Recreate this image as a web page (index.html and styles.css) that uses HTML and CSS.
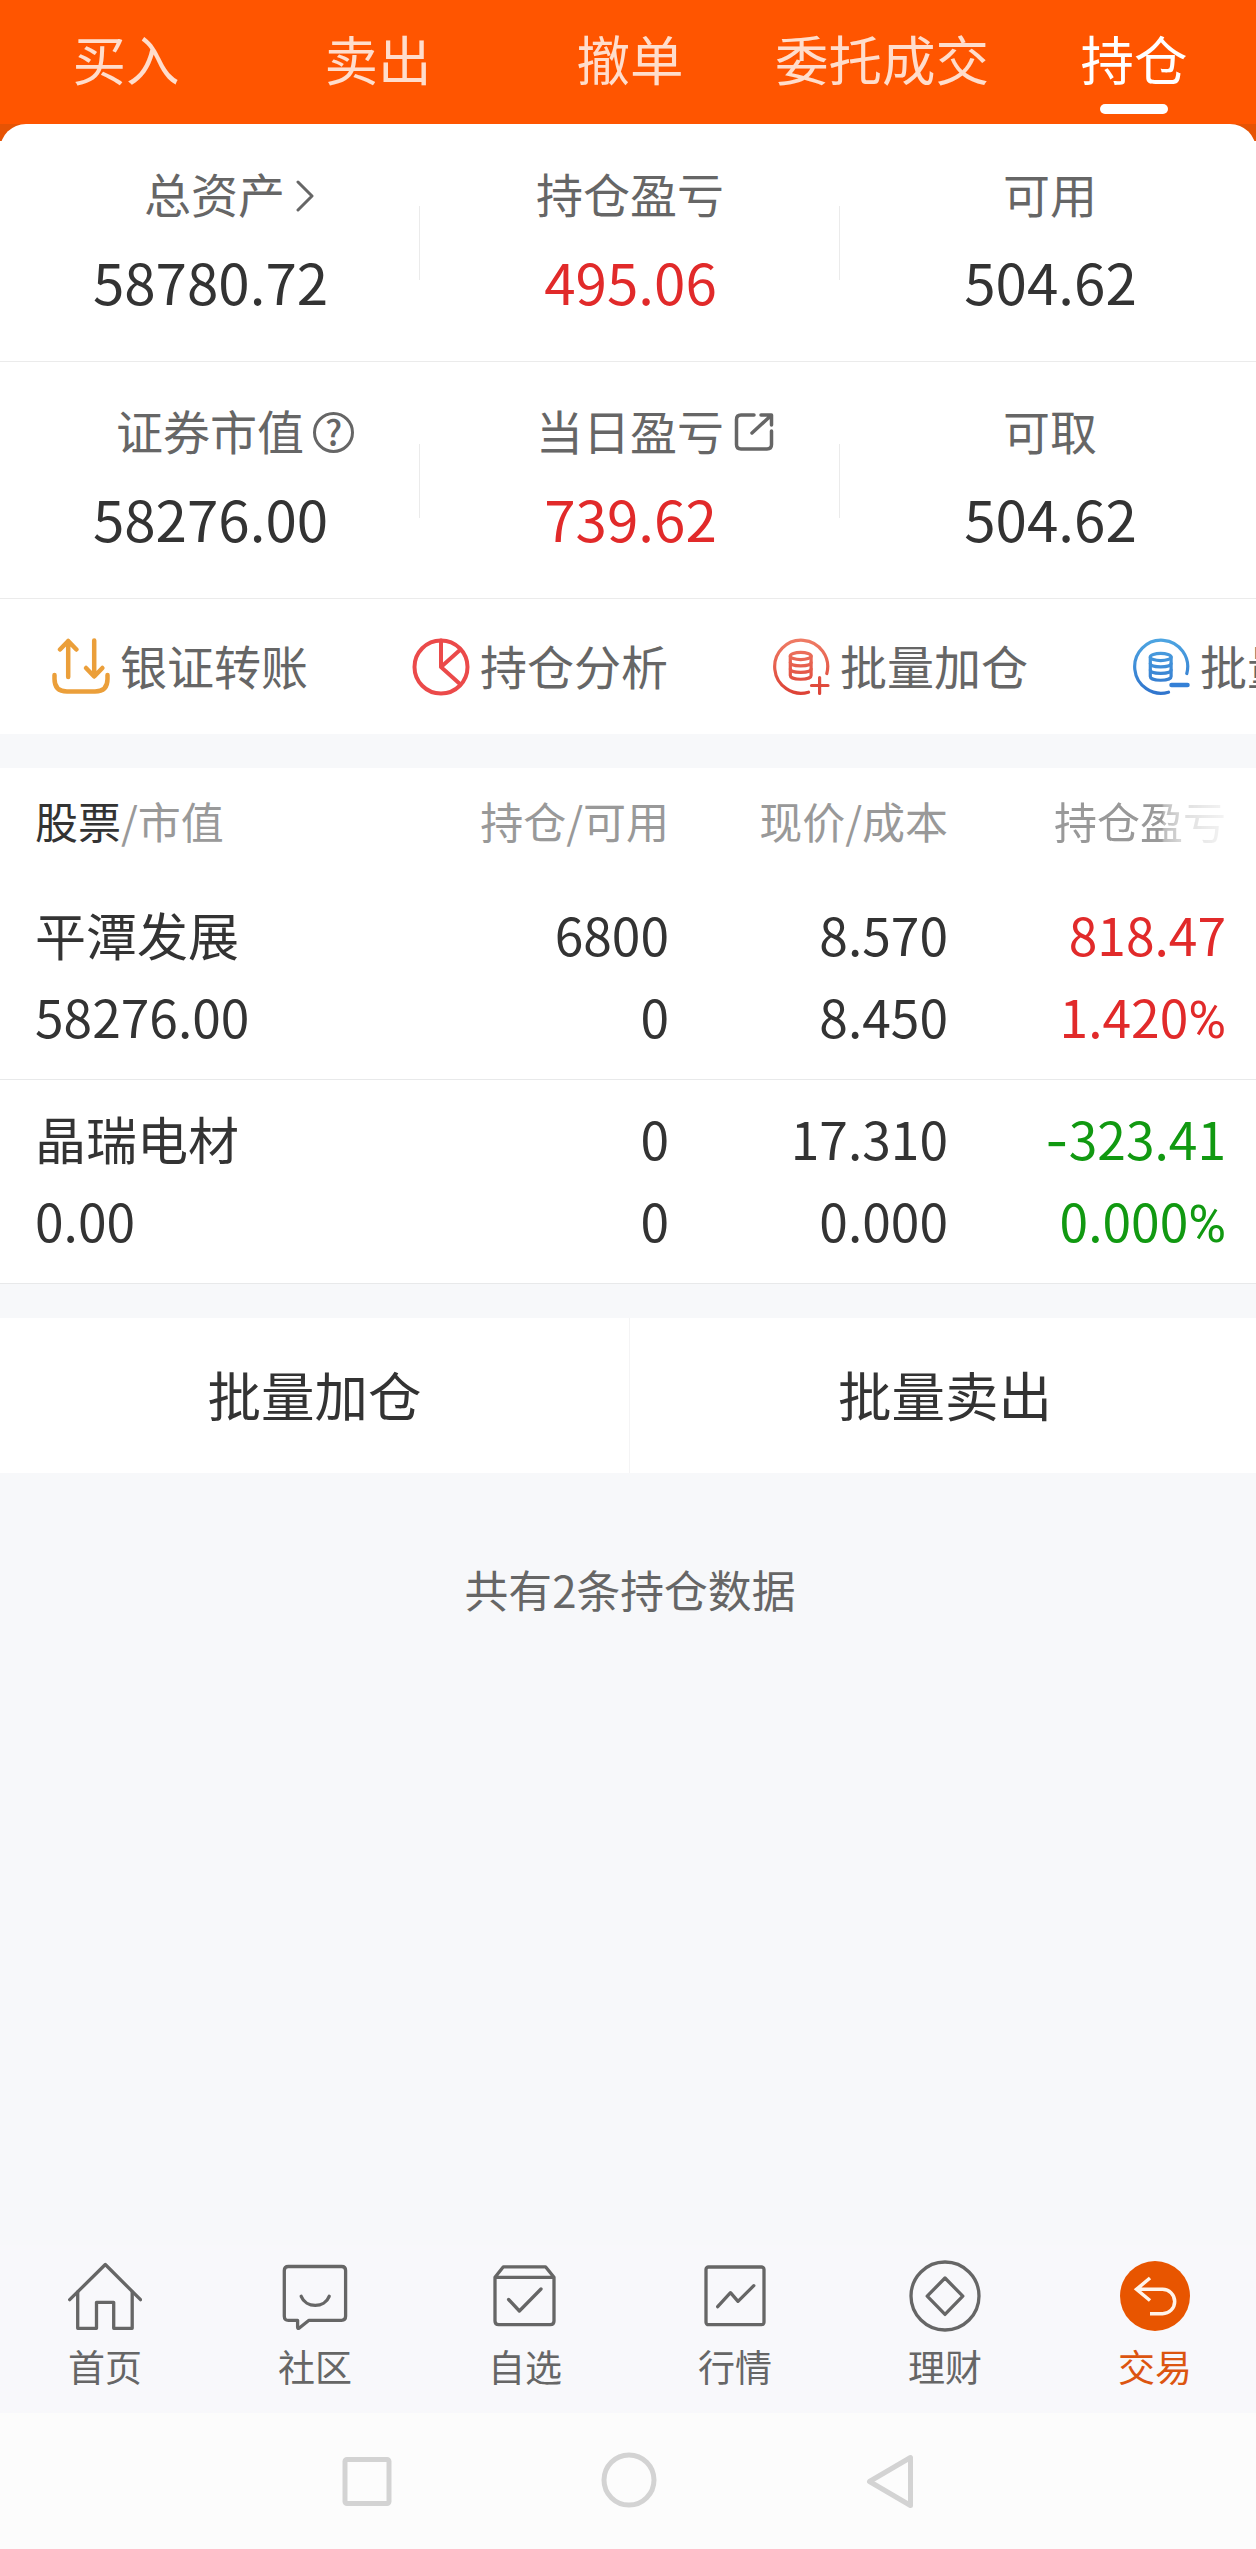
FILE: index.html
```
<!DOCTYPE html>
<html lang="zh-CN">
<head>
  <meta charset="UTF-8">
  <meta name="viewport" content="width=device-width, initial-scale=1.0">
  <title>持仓</title>
  <link rel="stylesheet" href="styles.css">
</head>
<body>
<div class="app">
  <nav class="top-tabs">
    <a class="top-tab">买入</a>
    <a class="top-tab">卖出</a>
    <a class="top-tab">撤单</a>
    <a class="top-tab">委托成交</a>
    <a class="top-tab active">持仓</a>
  </nav>

  <div class="summary-wrap">
    <section class="summary">
      <div class="stats">
        <div class="stat">
          <p class="label total">总资产<svg class="chevron" width="18" height="32" viewBox="0 0 18 32"><path d="M2 2 L16 16 L2 30"/></svg></p>
          <p class="value">58780.72</p>
        </div>
        <div class="stat">
          <p class="label">持仓盈亏</p>
          <p class="value red">495.06</p>
        </div>
        <div class="stat">
          <p class="label">可用</p>
          <p class="value">504.62</p>
        </div>
      </div>
      <div class="stats second">
        <div class="stat">
          <p class="label">证券市值<span class="help">?</span></p>
          <p class="value">58276.00</p>
        </div>
        <div class="stat">
          <p class="label">当日盈亏<svg class="share" width="40" height="40" viewBox="0 0 40 40"><path d="M20 3 H7 Q2.500 3 2.500 7.500 V32.500 Q2.500 37 7 37 H33 Q37.500 37 37.500 32.500 V19"/><path d="M27 3 H37.500 V13 M37 3.500 L18 21"/></svg></p>
          <p class="value red">739.62</p>
        </div>
        <div class="stat">
          <p class="label">可取</p>
          <p class="value">504.62</p>
        </div>
      </div>
    </section>
  </div>

  <div class="actions">
    <a class="action">
      <svg class="transfer" width="58" height="58" viewBox="0 0 58 58">
        <path d="M16.200 39 V3 M8 11.500 L16.200 3 L24.400 11.500"/>
        <path d="M42.200 2.500 V38 M34 30 L42.200 38.500 L50.400 30"/>
        <path d="M2.500 37 V41 Q2.500 53.500 15 53.500 H43 Q55.500 53.500 55.500 41 V37"/>
      </svg>
      <span>银证转账</span>
    </a>
    <a class="action">
      <svg class="pie" width="58" height="58" viewBox="0 0 58 58">
        <circle cx="29" cy="29" r="26.500"/>
        <path d="M29 2.500 V29 L48.500 11.500 M29 29 L48.500 46.500"/>
      </svg>
      <span>持仓分析</span>
    </a>
    <a class="action">
      <svg class="batch" width="58" height="58" viewBox="0 0 58 58">
        <defs>
          <linearGradient id="addColor" gradientUnits="userSpaceOnUse" x1="0" y1="0" x2="0" y2="58">
            <stop offset="0" stop-color="#ef7d66"/>
            <stop offset="1" stop-color="#dc4034"/>
          </linearGradient>
        </defs>
        <g stroke="url(#addColor)">
          <path d="M36.500 54.200 A26.500 26.500 0 1 1 54.800 35.500"/>
          <ellipse cx="28.700" cy="18" rx="10.400" ry="3.600"/>
          <path d="M18.300 18 V37.500 C18.300 42.500 39.100 42.500 39.100 37.500 V18"/>
          <path d="M18.300 24.500 C18.300 29 39.100 29 39.100 24.500 M18.300 31 C18.300 35.500 39.100 35.500 39.100 31"/>
          <path d="M39.500 47.500 H56 M47.600 39.500 V55.500"/>
        </g>
      </svg>
      <span>批量加仓</span>
    </a>
    <a class="action">
      <svg class="batch" width="58" height="58" viewBox="0 0 58 58">
        <defs>
          <linearGradient id="sellColor" gradientUnits="userSpaceOnUse" x1="0" y1="0" x2="0" y2="58">
            <stop offset="0" stop-color="#4ea6e2"/>
            <stop offset="1" stop-color="#2f73cc"/>
          </linearGradient>
        </defs>
        <g stroke="url(#sellColor)">
          <path d="M36.500 54.200 A26.500 26.500 0 1 1 54.800 35.500"/>
          <ellipse cx="28.700" cy="19" rx="10.400" ry="3.600"/>
          <path d="M18.300 19 V38.500 C18.300 43.500 39.100 43.500 39.100 38.500 V19"/>
          <path d="M18.300 25.500 C18.300 30 39.100 30 39.100 25.500 M18.300 32 C18.300 36.500 39.100 36.500 39.100 32"/>
        </g>
        <path d="M39.500 47 H55.500" stroke="#3480d6" stroke-width="4.500"/>
      </svg>
      <span>批量卖出</span>
    </a>
  </div>

  <section class="holdings">
    <div class="holdings-head">
      <span><b>股票</b>/市值</span>
      <span>持仓/可用</span>
      <span>现价/成本</span>
      <span class="fade">持仓盈亏</span>
    </div>
    <div class="holding">
      <span class="name">平潭发展</span>
      <span>6800</span>
      <span>8.570</span>
      <span class="red">818.47</span>
      <span>58276.00</span>
      <span>0</span>
      <span>8.450</span>
      <span class="red">1.420<i>%</i></span>
    </div>
    <div class="holding">
      <span class="name">晶瑞电材</span>
      <span>0</span>
      <span>17.310</span>
      <span class="green"><i class="minus">-</i>323.41</span>
      <span>0.00</span>
      <span>0</span>
      <span>0.000</span>
      <span class="green">0.000<i>%</i></span>
    </div>
  </section>

  <div class="batch-buttons">
    <button class="batch-button">批量加仓</button>
    <button class="batch-button">批量卖出</button>
  </div>

  <p class="count">共有2条持仓数据</p>

  <nav class="tabbar">
    <a class="tab">
      <svg width="74" height="74" viewBox="0 0 74 74"><path d="M1.700 40.700 L37.300 5.500 L72.500 40.700"/><path d="M9.700 33 V69.300 H28.500 V43.300 H45.700 V69.300 H64.200 V33"/></svg>
      <span>首页</span>
    </a>
    <a class="tab">
      <svg width="74" height="74" viewBox="0 0 74 74"><path d="M10.300 7.500 H63.600 Q67.600 7.500 67.600 11.500 V57.300 Q67.600 61.300 63.600 61.300 H31 L21 69.300 Q19.600 69.800 19.600 68 V61.300 H10.300 Q6.300 61.300 6.300 57.300 V11.500 Q6.300 7.500 10.300 7.500 Z"/><path d="M23.200 37.300 C28 49.500 46.500 49.500 51.200 37.300"/></svg>
      <span>社区</span>
    </a>
    <a class="tab">
      <svg width="74" height="74" viewBox="0 0 74 74"><path d="M7 18.300 L15.400 7.800 H57.500 L66 18.300 V62 Q66 65.700 62.300 65.700 H10.700 Q7 65.700 7 62 Z M7 18.300 H66"/><path d="M20.600 40.500 L31.400 52 L53 30"/></svg>
      <span>自选</span>
    </a>
    <a class="tab">
      <svg width="74" height="74" viewBox="0 0 74 74"><rect x="8" y="8" width="58" height="57.700" rx="2.500"/><path d="M19.700 47.700 L32.500 33.700 L40 42.300 L55.800 26.700"/></svg>
      <span>行情</span>
    </a>
    <a class="tab">
      <svg width="74" height="74" viewBox="0 0 74 74"><circle cx="37" cy="37" r="34"/><path d="M37 19 L54.800 37.200 L37 55.400 L19.200 37.200 Z"/></svg>
      <span>理财</span>
    </a>
    <a class="tab active">
      <svg width="74" height="74" viewBox="0 0 74 74"><circle class="disc" cx="37" cy="37" r="35"/><path d="M32 19 L18.500 30.300 L32 41.500 M18.500 30.300 H44.500 A12.200 12.200 0 0 1 44.500 54.700 H32"/></svg>
      <span>交易</span>
    </a>
  </nav>

  <div class="system-bar">
    <svg width="60" height="60" viewBox="0 0 60 60"><rect x="8" y="8.500" width="44" height="44" rx="2"/></svg>
    <svg width="60" height="60" viewBox="0 0 60 60"><circle cx="30" cy="29" r="25"/></svg>
    <svg width="60" height="60" viewBox="0 0 60 60"><path d="M8.500 30.500 L49.500 6.500 V54.500 Z"/></svg>
  </div>
</div>
</body>
</html>
```
FILE: styles.css
```
* {
  box-sizing: border-box;
  margin: 0;
  padding: 0;
}
body {
  background-color: #f7f8fa;
  font-family: "Noto Sans CJK SC", "Noto Sans", sans-serif;
  color: #333;
  overflow: hidden;
}
svg {
  fill: none;
  stroke-linecap: round;
  stroke-linejoin: round;
  flex: none;
}
/* a little wider than the screen, the right edge is cut off */
.app {
  width: 1260px;
  height: 2549px;
  display: flex;
  flex-direction: column;
}
.red {
  color: #e12a2a;
}
.green {
  color: #119911;
}

/* top tabs */
.top-tabs {
  display: grid;
  grid-template-columns: repeat(5, 1fr);
  height: 124px;
  background-color: #ff5500;
}
.top-tab {
  display: flex;
  flex-direction: column;
  align-items: center;
  padding-top: 28px;
  font-size: 53.5px;
  line-height: 60px;
  color: #ffddcc;
}
.top-tab.active {
  color: white;
}
.top-tab.active::after {
  content: "";
  width: 68px;
  height: 10px;
  margin-top: 16px;
  border-radius: 5px;
  background-color: white;
}

/* account summary */
.summary-wrap {
  width: 1256px;
  background: linear-gradient(#e65304 17px, #fff 17px);
}
.summary {
  width: 1256px;
  overflow: hidden;
  background-color: white;
  border-radius: 26px 26px 0 0;
}
.stats {
  display: grid;
  grid-template-columns: repeat(3, 420px);
  width: 1260px;
  height: 238px;
  border-bottom: 1px solid #ebebeb;
}
.stats.second {
  height: 237px;
}
.stat {
  padding-top: 39px;
}
.second .stat {
  padding-top: 38px;
}
.stat:not(:last-child) {
  background: linear-gradient(#ebebeb, #ebebeb) right 82px / 1px 74px no-repeat;
}
.label {
  display: flex;
  justify-content: center;
  align-items: center;
  font-size: 47px;
  line-height: 60px;
  color: #666;
}
.label.total {
  padding-left: 9px;
}
.chevron {
  margin: 5px -29px 0 11px;
  stroke: #666;
  stroke-width: 3;
}
.share {
  margin: 4px -50px 0 10px;
  stroke: #666;
  stroke-width: 3.5;
}
.help {
  width: 41px;
  height: 41px;
  margin: 5px -50px 0 9px;
  border: 3px solid #666;
  border-radius: 50%;
  font-size: 35px;
  font-weight: 500;
  line-height: 32px;
  text-align: center;
}
.value {
  margin-top: 27px;
  padding-left: 1px;
  font-size: 56.5px;
  line-height: 60px;
  text-align: center;
}

/* shortcuts */
.actions {
  display: flex;
  height: 135px;
  overflow: hidden;
  background-color: white;
}
.action {
  display: flex;
  flex: none;
  align-items: center;
  gap: 10px;
  width: 360px;
  padding-left: 52px;
  font-size: 47px;
  line-height: 60px;
  color: #666;
}
.action span {
  margin-bottom: 4px;
  white-space: nowrap;
}
.transfer {
  stroke: #eb9f3a;
  stroke-width: 4.5;
}
.pie {
  stroke: #eb4a4a;
  stroke-width: 4;
}
.batch {
  stroke-width: 3.2;
}

/* positions */
.holdings {
  margin-top: 34px;
  background-color: white;
}
.holdings-head, .holding {
  display: grid;
  grid-template-columns: 334px 300px 279px 278px;
  padding-left: 35px;
  text-align: right;
}
.holdings-head {
  height: 108px;
  font-size: 43px;
  line-height: 104px;
  color: #999;
}
.holdings-head b {
  font-weight: 400;
  color: #333;
}
.holdings-head span:first-child, .holding span:nth-child(4n + 1) {
  text-align: left;
}
.fade {
  -webkit-mask-image: linear-gradient(to right, #000 214px, rgba(0,0,0,0.65) 216px, rgba(0,0,0,0.3) 238px, rgba(0,0,0,0.1) 278px);
  mask-image: linear-gradient(to right, #000 214px, rgba(0,0,0,0.65) 216px, rgba(0,0,0,0.3) 238px, rgba(0,0,0,0.1) 278px);
}
.holding {
  height: 204px;
  padding-top: 17px;
  border-bottom: 1px solid #e8e9ea;
  font-size: 51.5px;
  line-height: 82px;
  grid-auto-rows: 82px;
}
.holding .name {
  font-size: 51px;
}
.holding i {
  font-family: Roboto, sans-serif;
  font-style: normal;
}
.holding .minus {
  font-family: Inter, sans-serif;
}

.batch-buttons {
  display: grid;
  grid-template-columns: 1fr 1fr;
  height: 155px;
  margin-top: 34px;
  background-color: white;
}
.batch-button {
  padding-bottom: 5px;
  border: none;
  background-color: transparent;
  font-family: inherit;
  font-size: 53.5px;
  color: #333;
}
.batch-button:first-child {
  border-right: 1px solid #f4f4f5;
}
.count {
  padding-top: 86px;
  font-size: 43.8px;
  line-height: 60px;
  text-align: center;
  color: #666;
}

/* bottom navigation */
.tabbar {
  display: grid;
  grid-template-columns: repeat(6, 1fr);
  height: 168px;
  margin-top: auto;
  background-color: #f8f8fb;
}
.tab {
  display: flex;
  flex-direction: column;
  align-items: center;
  gap: 10px;
  padding-top: 14px;
  font-size: 37px;
  line-height: 46px;
  color: #666;
}
.tab svg {
  stroke: #666;
  stroke-width: 3.3;
}
.tab.active {
  color: #dc5510;
}
.tab.active svg {
  stroke: #fff4ea;
  stroke-width: 3.5;
  stroke-linecap: butt;
  stroke-linejoin: miter;
}
.tab .disc {
  fill: #e85500;
  stroke: none;
}
.system-bar {
  display: flex;
  justify-content: center;
  align-items: center;
  gap: 202px;
  height: 136px;
  padding-right: 2px;
  background-color: #fcfcfc;
}
.system-bar svg {
  stroke: #d3d3d3;
  stroke-width: 5;
}
```
